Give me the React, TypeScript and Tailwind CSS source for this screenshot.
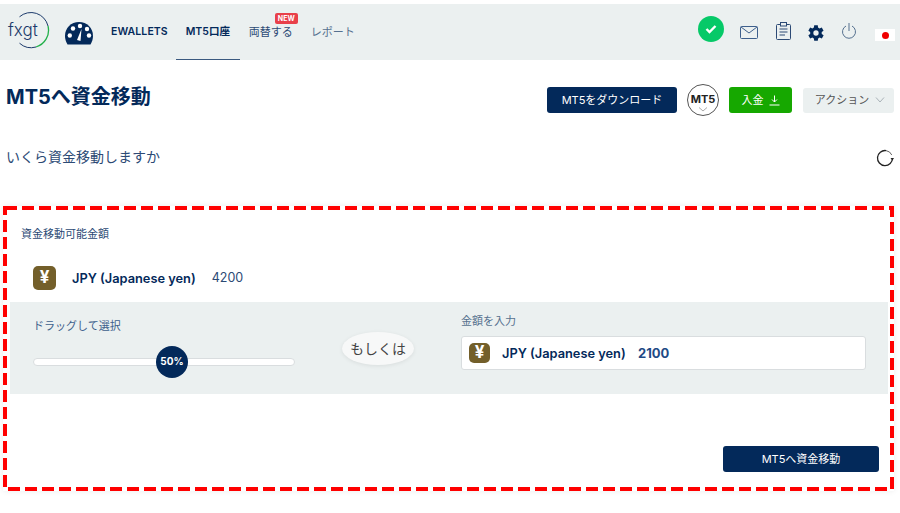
const font = { fontFamily: '"Inter", "Noto Sans CJK JP", sans-serif' };

function Logo() {
  return (
    <svg width="44" height="38" viewBox="0 0 44 38" className="absolute left-[6px] top-[8px]">
      <path d="M13.500 4.800 A17.500 17.500 0 0 1 42 14" fill="none" stroke="#1c3a6b" strokeWidth="1" />
      <path d="M42 14 A17.500 17.500 0 0 1 30 35" fill="none" stroke="#22b04a" strokeWidth="1.300" />
      <path d="M30 35 A17.500 17.500 0 0 1 13.500 31.200" fill="none" stroke="#1c3a6b" strokeWidth="1" />
    </svg>
  );
}

function Gauge() {
  return (
    <svg width="28" height="23" viewBox="0 0 28 23">
      <path d="M14 0 C6 0 0 6 0 14 C0 17 1 20 2.500 22.500 L25.500 22.500 C27 20 28 17 28 14 C28 6 22 0 14 0 Z" fill="#03295a" />
      <circle cx="4.800" cy="13.500" r="2.200" fill="#fff" />
      <circle cx="8" cy="6.500" r="2.200" fill="#fff" />
      <circle cx="15" cy="4" r="2.200" fill="#fff" />
      <circle cx="22" cy="7" r="2.200" fill="#fff" />
      <circle cx="24" cy="13.500" r="2.200" fill="#fff" />
      <path d="M16.500 7 L12 18 L15.500 19 Z" fill="#fff" />
    </svg>
  );
}

function YenBadge({ size }: { size: string }) {
  return (
    <div className={`${size} shrink-0 rounded-[5px] bg-[#735f2a] flex items-center justify-center text-white font-bold text-[17px]`}>
      ¥
    </div>
  );
}

export default function App() {
  return (
    <div style={font} className="relative w-[900px] h-[513px] bg-white pt-1 overflow-hidden text-[#03295a]">
      {/* top bar */}
      <div className="relative h-14 bg-[#ebf0f0] flex items-center">
        <Logo />
        <span className="absolute left-[8px] top-[15px] text-[17px] leading-[22px] font-light text-[#1c3a6b]">fxgt</span>
        <div className="ml-[65px] mt-[2px]">
          <Gauge />
        </div>
        <div className="ml-[18px] flex items-center text-[10.500px] font-semibold h-full">
          <span className="tracking-[0.1px]">EWALLETS</span>
          <span className="ml-[8px] w-[64px] h-full flex items-center justify-center border-b border-[#3b5a80]">MT5口座</span>
          <span className="relative ml-[9px] font-normal text-[#2c4a75] text-[11px]">
            両替する
            <span className="absolute left-[26px] -top-[11px] rounded-[2px] bg-[#e8404a] px-[3px] text-[7px] leading-[11px] font-bold text-white">NEW</span>
          </span>
          <span className="ml-[18px] font-normal text-[#56708f] text-[11px]">レポート</span>
        </div>
        <div className="ml-auto flex items-center">
          <div className="-mt-[6px] w-[26px] h-[26px] rounded-full bg-[#06c968] flex items-center justify-center">
            <svg width="12" height="10" viewBox="0 0 12 10"><path d="M1.500 5 L4.500 8 L10.500 2" fill="none" stroke="#fff" strokeWidth="2.400" /></svg>
          </div>
          <svg className="ml-[16px] mt-[1px]" width="18" height="13" viewBox="0 0 18 13" fill="none" stroke="#3d5f8c" strokeWidth="1">
            <rect x="0.500" y="0.500" width="17" height="12" rx="1" />
            <path d="M1 1 L9 7 L17 1" />
          </svg>
          <svg className="ml-[18px] -mt-[2px]" width="15" height="18" viewBox="0 0 15 18" fill="none" stroke="#2c4a75" strokeWidth="1">
            <rect x="0.500" y="2.500" width="14" height="15" rx="1" />
            <rect x="4.500" y="0.500" width="6" height="3.500" fill="#ebf0f0" />
            <path d="M3.500 7 H11.500 M3.500 10 H11.500 M3.500 13 H9" />
          </svg>
          <svg className="ml-[17px] mt-[1px]" width="16" height="16" viewBox="3 3 18 18">
            <path fill="#03295a" fillRule="evenodd" d="M18.400 13a7.700 7.700 0 0 0 0-2l2.100-1.600-2-3.500-2.500 1a7.600 7.600 0 0 0-1.700-1L14 3.200h-4l-.4 2.700a7.600 7.600 0 0 0-1.700 1l-2.500-1-2 3.500L5.500 11a7.700 7.700 0 0 0 0 2l-2.100 1.600 2 3.500 2.500-1a7.600 7.600 0 0 0 1.700 1l.4 2.700h4l.4-2.700a7.600 7.600 0 0 0 1.700-1l2.500 1 2-3.500zM12 15a3 3 0 1 1 0-6 3 3 0 0 1 0 6z" />
          </svg>
          <svg className="ml-[17px] -mt-[3px]" width="16" height="16" viewBox="0 0 16 16" fill="none" stroke="#55708f" strokeWidth="1">
            <path d="M5 3 A6.500 6.500 0 1 0 11 3" />
            <path d="M8 0 V8" />
          </svg>
          <div className="ml-[18px] mr-[5px] mt-[6px] w-5 h-3 bg-white flex items-center justify-center">
            <div className="w-[7px] h-[7px] rounded-full bg-[#f00000]" />
          </div>
        </div>
      </div>

      {/* title row */}
      <div className="flex items-center h-[32px] mt-[24px] pl-[6px] pr-[6px]">
        <h1 className="text-[20px] font-bold -mt-[6px]">MT5へ資金移動</h1>
        <div className="ml-auto flex items-center text-[11px]">
          <button className="w-[130px] h-[26px] rounded-[3px] bg-[#03295a] text-white">MT5をダウンロード</button>
          <div className="relative ml-[10px] w-[32px] h-[32px] rounded-full border border-[#555] flex justify-center pt-[6px] text-[11px] font-bold text-[#222]">
            MT5
            <svg className="absolute left-[10px] bottom-[3px]" width="10" height="5" viewBox="0 0 10 5" fill="none" stroke="#aaa"><path d="M1 0.500 L5 4 L9 0.500" /></svg>
          </div>
          <button className="ml-[10px] w-[63px] h-[26px] rounded-[3px] bg-[#16a800] text-white flex items-center justify-center gap-[5px]">
            入金
            <svg width="11" height="11" viewBox="0 0 11 11" fill="none" stroke="#fff"><path d="M5.500 0.500 V7 M3 4.500 L5.500 7 L8 4.500 M0.500 10 H10.500" /></svg>
          </button>
          <button className="ml-[11px] w-[91px] h-[25px] pl-[3px] rounded-[3px] bg-[#ebf0f0] text-[#555] flex items-center justify-center gap-[6px]">
            アクション
            <svg width="10" height="6" viewBox="0 0 10 6" fill="none" stroke="#a9b2b8"><path d="M1 0.500 L5 5 L9 0.500" /></svg>
          </button>
        </div>
      </div>

      {/* subtitle */}
      <div className="flex items-center justify-between h-[20px] mt-[30px] pl-[6px] pr-[6px]">
        <p className="text-[14px] text-[#2c4a75]">いくら資金移動しますか</p>
        <svg className="mt-[3px]" width="18" height="18" viewBox="0 0 18 18" fill="none" stroke="#222" strokeWidth="1.300">
          <path d="M10 1.600 A7.500 7.500 0 1 0 16.500 9" />
          <path d="M10 1.600 A7.500 7.500 0 0 1 15.800 6" stroke="#666" strokeWidth="1" />
          <path d="M14.500 9 L16.500 11.500 L18 9 Z" fill="#222" stroke="none" />
        </svg>
      </div>

      {/* transfer card */}
      <div className="relative mt-[40px] ml-[3px] w-[891px] h-[285px] pl-[7px] pr-[6px] shadow-[0_0_6px_rgba(0,0,0,0.08)]">
        <svg className="absolute inset-0" width="891" height="285" fill="none">
          <rect x="2" y="2" width="887" height="281" stroke="#ff0000" strokeWidth="4" strokeDasharray="12 5" />
        </svg>
        <p className="pt-[21px] pl-[11px] text-[11px] leading-[14px] text-[#2c4a75]">資金移動可能金額</p>
        <div className="flex items-center h-[24px] mt-[25px] pl-[23px]">
          <YenBadge size="w-[23px] h-[24px]" />
          <span className="ml-[16px] mt-[1px] text-[12.800px] font-semibold">JPY (Japanese yen)</span>
          <span className="ml-[16px] mt-[1px] text-[12.500px] text-[#2c4a75]">4200</span>
        </div>

        <div className="mt-[12px] h-[92px] bg-[#ebf0f0] flex">
          <div className="w-[332px] pl-[23px]">
            <p className="mt-[17px] text-[11px] leading-[14px] text-[#3d5f8c]">ドラッグして選択</p>
            <div className="relative mt-[25px] w-[262px] h-[8px] rounded-full bg-white border-[1.500px] border-[#d9dddf]">
              <div className="absolute left-[122px] -top-[13.500px] w-[32px] h-[32px] rounded-full bg-[#03295a] flex items-center justify-center text-white text-[10px] font-bold">
                50%
              </div>
            </div>
          </div>
          <div className="w-[72px] h-[33px] mt-[30px] rounded-[50%] bg-[#f7f8f8] shadow-[0_1px_4px_rgba(0,0,0,0.08)] flex items-center justify-center text-[14px] text-[#444]">
            もしくは
          </div>
          <div className="ml-[47px]">
            <p className="mt-[12px] text-[11px] leading-[14px] text-[#56708f]">金額を入力</p>
            <div className="mt-[8px] w-[405px] h-[34px] rounded-[3px] bg-white border border-[#d9dddf] flex items-center pl-[7px]">
              <YenBadge size="w-[21px] h-[20px]" />
              <span className="ml-[12px] mt-[1px] w-[136px] text-[12.800px] font-semibold">JPY (Japanese yen)</span>
              <span className="mt-[1px] text-[13px] font-bold text-[#1f4a86]">2100</span>
            </div>
          </div>
        </div>

        <div className="flex justify-end mt-[52px] pr-[9px]">
          <button className="w-[156px] h-[26px] rounded-[3px] bg-[#03295a] text-white text-[11px]">MT5へ資金移動</button>
        </div>
      </div>
    </div>
  );
}
